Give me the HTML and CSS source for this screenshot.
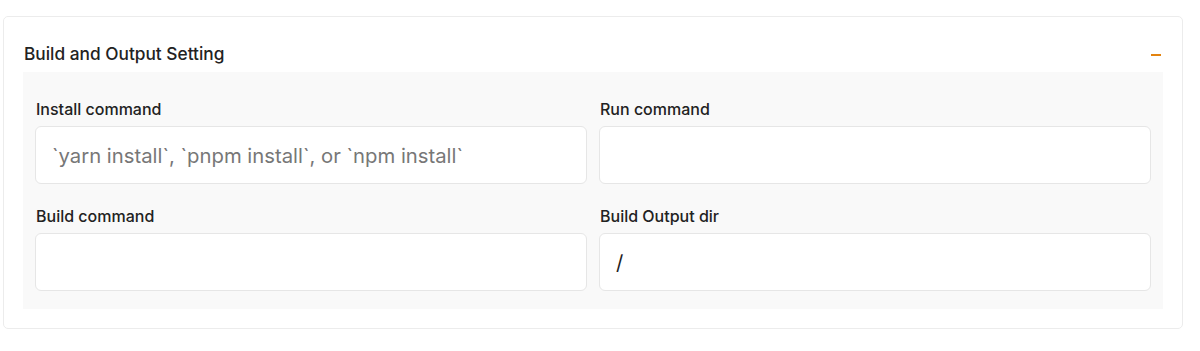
FILE: index.html
```html
<!DOCTYPE html>
<html lang="en">
<head>
<meta charset="UTF-8">
<meta name="viewport" content="width=device-width, initial-scale=1.0">
<title>Build and Output Setting</title>
<link rel="stylesheet" href="styles.css">
</head>
<body>
<div class="card">
    <div class="card-header">
        <h2>Build and Output Setting</h2>
        <span class="collapse" title="Collapse"></span>
    </div>
    <div class="panel">
        <div class="field">
            <label for="install-command">Install command</label>
            <input type="text" id="install-command" placeholder="`yarn install`, `pnpm install`, or `npm install`">
        </div>
        <div class="field">
            <label for="run-command">Run command</label>
            <input type="text" id="run-command">
        </div>
        <div class="field">
            <label for="build-command">Build command</label>
            <input type="text" id="build-command">
        </div>
        <div class="field">
            <label for="output-dir">Build Output dir</label>
            <input type="text" id="output-dir" value="/">
        </div>
    </div>
</div>
</body>
</html>
```

FILE: styles.css
```css
body, html {
    margin: 0;
    padding: 0;
}
body {
    font-family: Inter, "Noto Sans", sans-serif;
    background-color: #fff;
    color: #222;
}
.card {
    margin: 16px 17px 0 3px;
    border: 1px solid #ececec;
    border-radius: 5px;
    padding: 0 19px 19px;
}
.card-header {
    display: flex;
    justify-content: space-between;
    align-items: center;
    padding-top: 26px;
    margin-bottom: 7px;
    height: 22px;
}
h2 {
    margin: 0;
    font-size: 17.3px;
    line-height: 22px;
    font-weight: 500;
    padding-left: 1px;
}
.collapse {
    width: 10px;
    height: 2px;
    margin-right: 2px;
    margin-top: 2px;
    background-color: #e3830f;
    cursor: pointer;
}
.panel {
    background-color: #f9f9f9;
    padding: 27px 12px 18px;
    display: grid;
    grid-template-columns: 1fr 1fr;
    column-gap: 12px;
    row-gap: 22px;
}
.field {
    display: flex;
    flex-direction: column;
}
label {
    font-size: 16px;
    line-height: 20px;
    font-weight: 500;
    margin-bottom: 7px;
    padding-left: 1px;
}
input[type="text"] {
    box-sizing: border-box;
    height: 58px;
    border: 1px solid #e6e6e6;
    border-radius: 6px;
    background-color: #fff;
    padding: 0 16px;
    font-family: inherit;
    font-size: 20.3px;
    color: #222;
    outline: none;
}
input::placeholder {
    color: #777;
}
```
